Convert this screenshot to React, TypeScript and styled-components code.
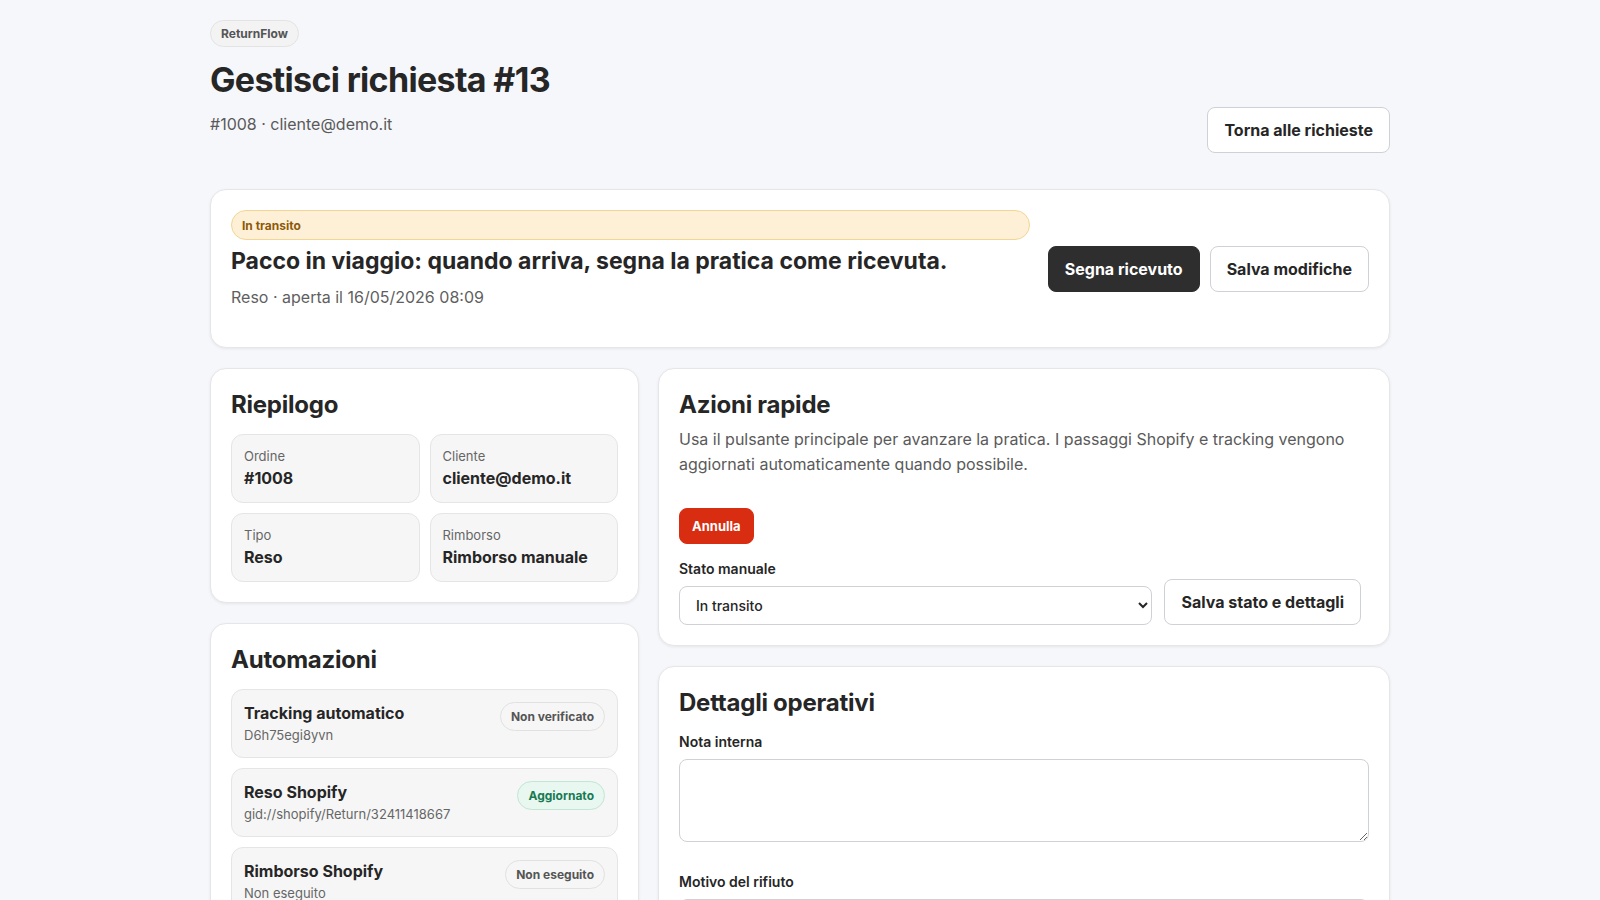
import * as React from 'react';
import styled, { createGlobalStyle } from 'styled-components';

type BadgeTone = 'neutral' | 'success';

interface SummaryItem {
  label: string;
  value: string;
}

interface Automation {
  title: string;
  detail: string;
  status: string;
  tone: BadgeTone;
}

const summary: SummaryItem[] = [
  { label: 'Ordine', value: '#1008' },
  { label: 'Cliente', value: 'cliente@demo.it' },
  { label: 'Tipo', value: 'Reso' },
  { label: 'Rimborso', value: 'Rimborso manuale' },
];

const automations: Automation[] = [
  { title: 'Tracking automatico', detail: 'D6h75egi8yvn', status: 'Non verificato', tone: 'neutral' },
  { title: 'Reso Shopify', detail: 'gid://shopify/Return/32411418667', status: 'Aggiornato', tone: 'success' },
  { title: 'Rimborso Shopify', detail: 'Non eseguito', status: 'Non eseguito', tone: 'neutral' },
];

const GlobalStyle = createGlobalStyle`
  * {
    box-sizing: border-box;
  }
  body {
    margin: 0;
    background: #f6f7fa;
    color: #262626;
    font-family: Inter, 'Noto Sans', sans-serif;
  }
`;

const Page = styled.div`
  max-width: 1180px;
  margin: 0 auto;
  padding: 20px 0 40px;
`;

const Header = styled.header`
  display: flex;
  justify-content: space-between;
  align-items: flex-end;
  margin-bottom: 36px;
`;

const Brand = styled.span`
  display: inline-flex;
  align-items: center;
  height: 27px;
  padding: 0 10px;
  border: 1px solid #e3e3e3;
  border-radius: 999px;
  background: #f3f3f3;
  color: #555;
  font-size: 12px;
  font-weight: 700;
`;

const Title = styled.h1`
  margin: 12px 0 0;
  font-size: 34px;
  line-height: 41px;
  font-weight: 700;
  letter-spacing: -0.02em;
`;

const Subtitle = styled.p`
  margin: 12px 0 16px;
  font-size: 16px;
  line-height: 25px;
  color: #5a5a5a;
`;

const Button = styled.button<{ $variant?: 'primary' | 'secondary' | 'danger'; $small?: boolean }>`
  height: ${(p) => (p.$small ? '36px' : '46px')};
  padding: 0 ${(p) => (p.$small ? '12px' : '16px')};
  border-radius: 8px;
  border: 1px solid
    ${(p) => (p.$variant === 'primary' ? '#2e2e2e' : p.$variant === 'danger' ? '#d92d12' : '#cfd1d6')};
  background: ${(p) => (p.$variant === 'primary' ? '#2e2e2e' : p.$variant === 'danger' ? '#d92d12' : '#fff')};
  color: ${(p) => (p.$variant === 'primary' || p.$variant === 'danger' ? '#fff' : '#262626')};
  font-family: inherit;
  font-size: ${(p) => (p.$small ? '13px' : '16px')};
  font-weight: 700;
  white-space: nowrap;
  cursor: pointer;
`;

const Card = styled.section`
  background: #fff;
  border: 1px solid #e6e6e8;
  border-radius: 16px;
  box-shadow: 0 1px 3px rgba(0, 0, 0, 0.07);
  padding: 20px;
`;

const Hero = styled(Card)`
  display: flex;
  align-items: center;
  gap: 18px;
  margin-bottom: 20px;
`;

const HeroMain = styled.div`
  flex: 1;
  min-width: 0;
`;

const StatusPill = styled.div`
  display: flex;
  align-items: center;
  height: 30px;
  padding: 0 10px;
  border: 1px solid #f3d594;
  border-radius: 999px;
  background: #fdf0d7;
  color: #8c5a0a;
  font-size: 12px;
  font-weight: 700;
`;

const HeroTitle = styled.h2`
  margin: 6px 0 0;
  font-size: 23px;
  line-height: 31px;
  font-weight: 700;
`;

const HeroMeta = styled.p`
  margin: 8px 0 18px;
  font-size: 16px;
  line-height: 24px;
  color: #5f5f5f;
`;

const HeroActions = styled.div`
  display: flex;
  gap: 10px;
`;

const Columns = styled.div`
  display: grid;
  grid-template-columns: minmax(0, 429fr) minmax(0, 732fr);
  gap: 19px;
  align-items: start;
`;

const Stack = styled.div`
  display: flex;
  flex-direction: column;
  gap: 20px;
`;

const CardTitle = styled.h3`
  margin: 0 0 14px;
  font-size: 24px;
  line-height: 31px;
  font-weight: 700;
  letter-spacing: -0.01em;
`;

const SummaryGrid = styled.div`
  display: grid;
  grid-template-columns: 1fr 1fr;
  gap: 10px;
`;

const Tile = styled.div`
  background: #f6f6f6;
  border: 1px solid #e5e5e5;
  border-radius: 12px;
  padding: 12px 12px 13px;
`;

const TileLabel = styled.div`
  font-size: 13px;
  line-height: 18px;
  color: #666;
`;

const TileValue = styled.div`
  margin-top: 2px;
  font-size: 16px;
  line-height: 22px;
  font-weight: 700;
`;

const AutomationList = styled.div`
  display: flex;
  flex-direction: column;
  gap: 10px;
`;

const AutomationRow = styled(Tile)`
  display: flex;
  justify-content: space-between;
  align-items: flex-start;
  gap: 12px;
`;

const AutomationTitle = styled.div`
  font-size: 16px;
  line-height: 22px;
  font-weight: 700;
`;

const AutomationDetail = styled.div`
  margin-top: 2px;
  font-size: 13px;
  line-height: 18px;
  color: #666;
`;

const Badge = styled.span<{ $tone: BadgeTone }>`
  display: inline-flex;
  align-items: center;
  flex-shrink: 0;
  height: 29px;
  padding: 0 10px;
  border-radius: 999px;
  border: 1px solid ${(p) => (p.$tone === 'success' ? '#bfe7d3' : '#e1e1e1')};
  background: ${(p) => (p.$tone === 'success' ? '#e8f7f0' : '#f6f6f6')};
  color: ${(p) => (p.$tone === 'success' ? '#177a52' : '#555')};
  font-size: 12px;
  font-weight: 700;
`;

const Description = styled.p`
  margin: -7px 0 0;
  font-size: 16px;
  line-height: 25px;
  color: #5a5a5a;
`;

const ActionBar = styled.div`
  margin-top: 31px;
`;

const FieldLabel = styled.label`
  display: block;
  margin-bottom: 7px;
  font-size: 14px;
  line-height: 20px;
  font-weight: 600;
`;

const StateRow = styled.div`
  display: grid;
  grid-template-columns: minmax(0, 1fr) auto;
  gap: 12px;
  align-items: end;
  max-width: 682px;
  margin-top: 15px;
`;

const Select = styled.select`
  width: 100%;
  height: 39px;
  padding: 0 12px;
  border: 1px solid #cfd1d6;
  border-radius: 8px;
  background: #fff;
  color: #262626;
  font-family: inherit;
  font-size: 14px;
  font-weight: 500;
`;

const TextArea = styled.textarea`
  display: block;
  width: 100%;
  height: 83px;
  padding: 10px 12px;
  border: 1px solid #cfd1d6;
  border-radius: 8px;
  font-family: inherit;
  font-size: 14px;
  resize: vertical;
`;

const Field = styled.div`
  & + & {
    margin-top: 30px;
  }
`;

const DetailsTitle = styled(CardTitle)`
  margin-bottom: 14px;
`;

export default function App() {
  return (
    <>
      <GlobalStyle />
      <Page>
        <Header>
          <div>
            <Brand>ReturnFlow</Brand>
            <Title>Gestisci richiesta #13</Title>
            <Subtitle>#1008 · cliente@demo.it</Subtitle>
          </div>
          <Button $variant="secondary">Torna alle richieste</Button>
        </Header>

        <Hero>
          <HeroMain>
            <StatusPill>In transito</StatusPill>
            <HeroTitle>Pacco in viaggio: quando arriva, segna la pratica come ricevuta.</HeroTitle>
            <HeroMeta>Reso · aperta il 16/05/2026 08:09</HeroMeta>
          </HeroMain>
          <HeroActions>
            <Button $variant="primary">Segna ricevuto</Button>
            <Button $variant="secondary">Salva modifiche</Button>
          </HeroActions>
        </Hero>

        <Columns>
          <Stack>
            <Card>
              <CardTitle>Riepilogo</CardTitle>
              <SummaryGrid>
                {summary.map((item) => (
                  <Tile key={item.label}>
                    <TileLabel>{item.label}</TileLabel>
                    <TileValue>{item.value}</TileValue>
                  </Tile>
                ))}
              </SummaryGrid>
            </Card>

            <Card>
              <CardTitle>Automazioni</CardTitle>
              <AutomationList>
                {automations.map((a) => (
                  <AutomationRow key={a.title}>
                    <div>
                      <AutomationTitle>{a.title}</AutomationTitle>
                      <AutomationDetail>{a.detail}</AutomationDetail>
                    </div>
                    <Badge $tone={a.tone}>{a.status}</Badge>
                  </AutomationRow>
                ))}
              </AutomationList>
            </Card>
          </Stack>

          <Stack>
            <Card>
              <CardTitle>Azioni rapide</CardTitle>
              <Description>
                Usa il pulsante principale per avanzare la pratica. I passaggi Shopify e tracking vengono
                aggiornati automaticamente quando possibile.
              </Description>
              <ActionBar>
                <Button $variant="danger" $small>
                  Annulla
                </Button>
              </ActionBar>
              <StateRow>
                <div>
                  <FieldLabel htmlFor="stato">Stato manuale</FieldLabel>
                  <Select id="stato" defaultValue="in_transito">
                    <option value="in_attesa">In attesa</option>
                    <option value="in_transito">In transito</option>
                    <option value="ricevuto">Ricevuto</option>
                    <option value="chiuso">Chiuso</option>
                  </Select>
                </div>
                <Button $variant="secondary">Salva stato e dettagli</Button>
              </StateRow>
            </Card>

            <Card>
              <DetailsTitle>Dettagli operativi</DetailsTitle>
              <Field>
                <FieldLabel htmlFor="nota">Nota interna</FieldLabel>
                <TextArea id="nota" />
              </Field>
              <Field>
                <FieldLabel htmlFor="motivo">Motivo del rifiuto</FieldLabel>
                <TextArea id="motivo" />
              </Field>
            </Card>
          </Stack>
        </Columns>
      </Page>
    </>
  );
}
